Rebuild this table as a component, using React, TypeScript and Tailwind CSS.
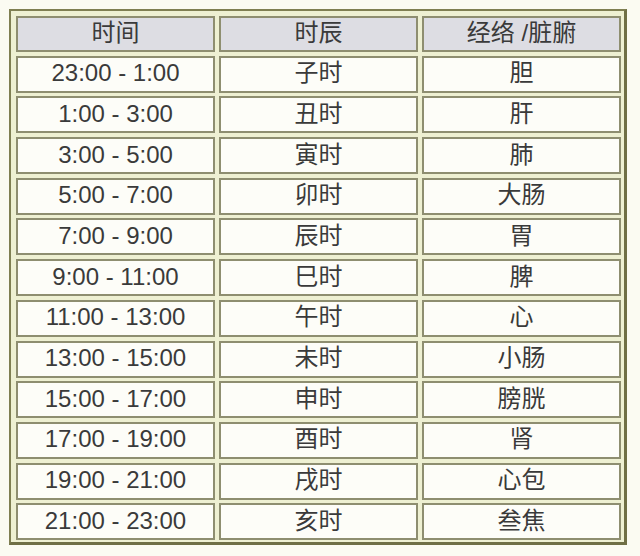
const rows: Array<[string, string, string]> = [
  ["23:00 - 1:00", "子时", "胆"],
  ["1:00 - 3:00", "丑时", "肝"],
  ["3:00 - 5:00", "寅时", "肺"],
  ["5:00 - 7:00", "卯时", "大肠"],
  ["7:00 - 9:00", "辰时", "胃"],
  ["9:00 - 11:00", "巳时", "脾"],
  ["11:00 - 13:00", "午时", "心"],
  ["13:00 - 15:00", "未时", "小肠"],
  ["15:00 - 17:00", "申时", "膀胱"],
  ["17:00 - 19:00", "酉时", "肾"],
  ["19:00 - 21:00", "戌时", "心包"],
  ["21:00 - 23:00", "亥时", "叁焦"],
];

const headers = ["时间", "时辰", "经络 /脏腑"];

function Cell({ text, head }: { text: string; head?: boolean }) {
  return (
    <div
      className={`flex items-center justify-center border-2 border-[#8e8e70] text-[24px] leading-none text-[#3a3a3a] pb-[2px] ${
        head ? "h-[36px] bg-[#dddde3]" : "h-[37px] bg-[#fdfdf8]"
      }`}
    >
      {text}
    </div>
  );
}

export default function App() {
  return (
    <div
      className="w-[640px] h-[556px] bg-[#fbfbf2] pt-[9px] pl-[9px]"
      style={{ fontFamily: '"Liberation Sans", "Noto Sans CJK SC", sans-serif' }}
    >
      <div className="w-[618px] bg-[#eef0d2] border-l-2 border-t-2 border-r-[3px] border-b-[3px] border-l-[#7f7f52] border-t-[#7f7f52] border-r-[#6f6f45] border-b-[#6f6f45] pl-[5px] pt-[5px] pr-[3px] pb-[2px]">
        <div className="grid grid-cols-3 gap-x-[4px] gap-y-[3.7px]">
          {headers.map((h) => (
            <Cell key={h} text={h} head />
          ))}
          {rows.map((r) =>
            r.map((c, i) => <Cell key={r[0] + i} text={c} />),
          )}
        </div>
      </div>
    </div>
  );
}
